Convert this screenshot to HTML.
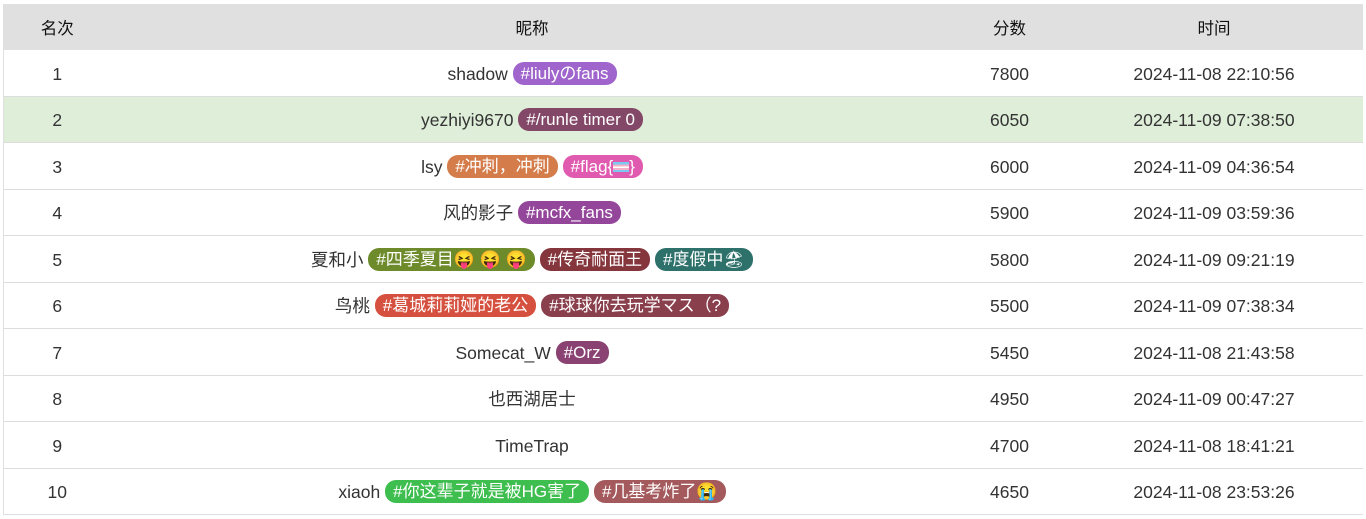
<!DOCTYPE html>
<html><head><meta charset="utf-8"><style>
body{margin:0;background:#fff;font-family:"Liberation Sans","Noto Sans CJK SC",sans-serif;font-size:17.5px;color:#333;}
table{position:absolute;left:3px;top:4px;width:1359px;border-collapse:collapse;table-layout:fixed;border-left:1px solid #e0e0e0;}
th{background:#e0e0e0;height:46px;font-weight:normal;color:#111;padding:0;font-size:16.5px;}
td{height:43.5px;text-align:center;border-bottom:1px solid #ddd;padding:2px 0 0 0;white-space:nowrap;line-height:22px;}
tr.hl td{background:#dfeed9;}
.t{display:inline-block;color:#fff;border-radius:11px;padding:0 8px;line-height:23px;height:23px;vertical-align:top;margin-top:-1px;font-size:17px;}
</style></head><body>
<table>
<colgroup><col style="width:107px"><col style="width:843px"><col style="width:112px"><col style="width:297px"></colgroup>
<tr><th>名次</th><th>昵称</th><th>分数</th><th>时间</th></tr>
<tr><td>1</td><td>shadow <span class="t" style="background:#a065cc">#liulyのfans</span></td><td>7800</td><td>2024-11-08 22:10:56</td></tr>
<tr class="hl"><td>2</td><td>yezhiyi9670 <span class="t" style="background:#834868">#/runle timer 0</span></td><td>6050</td><td>2024-11-09 07:38:50</td></tr>
<tr><td>3</td><td>lsy <span class="t" style="background:#d47c4a">#冲刺，冲刺</span> <span class="t" style="background:#e05bb0">#flag{<span style="display:inline-block;width:16px;height:10px;background:linear-gradient(#7cc8f0 0 25%,#f4b0c8 25% 45%,#fff 45% 60%,#f4b0c8 60% 80%,#7cc8f0 80%)"></span>}</span></td><td>6000</td><td>2024-11-09 04:36:54</td></tr>
<tr><td>4</td><td>风的影子 <span class="t" style="background:#94469b">#mcfx_fans</span></td><td>5900</td><td>2024-11-09 03:59:36</td></tr>
<tr><td>5</td><td>夏和小 <span class="t" style="background:#6e8b2b">#四季夏目😝 😝 😝</span> <span class="t" style="background:#84363c">#传奇耐面王</span> <span class="t" style="background:#2e716b">#度假中🏖</span></td><td>5800</td><td>2024-11-09 09:21:19</td></tr>
<tr><td>6</td><td>鸟桃 <span class="t" style="background:#d5503e">#葛城莉莉娅的老公</span> <span class="t" style="background:#8a3f4d">#球球你去玩学マス（?</span></td><td>5500</td><td>2024-11-09 07:38:34</td></tr>
<tr><td>7</td><td>Somecat_W <span class="t" style="background:#8a4272">#Orz</span></td><td>5450</td><td>2024-11-08 21:43:58</td></tr>
<tr><td>8</td><td>也西湖居士</td><td>4950</td><td>2024-11-09 00:47:27</td></tr>
<tr><td>9</td><td>TimeTrap</td><td>4700</td><td>2024-11-08 18:41:21</td></tr>
<tr><td>10</td><td>xiaoh <span class="t" style="background:#3dbe4e">#你这辈子就是被HG害了</span> <span class="t" style="background:#a45a5c">#几基考炸了😭</span></td><td>4650</td><td>2024-11-08 23:53:26</td></tr>
</table>
</body></html>
